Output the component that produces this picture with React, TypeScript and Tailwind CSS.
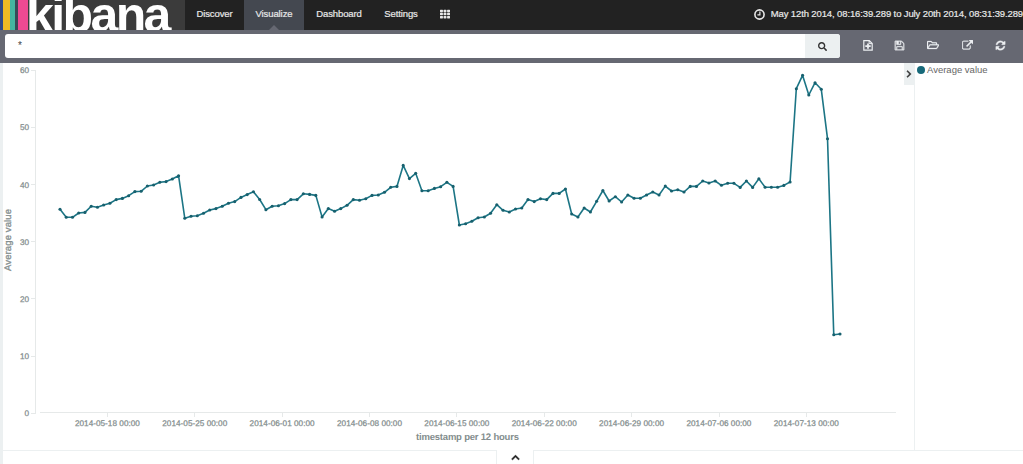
import React from "react";
import { FaTh, FaSearch, FaChevronRight, FaChevronUp, FaRegFolderOpen } from "react-icons/fa";

const STEP = 6.24;
const X0 = 60;

// Vertical positions of the 12-hour averages in chart coordinates.
const points = [
  209.3, 217.3, 217.3, 213, 212.4, 206.3, 207.3, 205, 203.3, 199.6, 198.4, 195.7, 191.6, 191.3, 186, 185,
  182.3, 181.6, 179, 175.7, 218.3, 216.3, 215.7, 213.3, 210, 208.6, 206.3, 203.3, 201.6, 197.4, 194.6, 191.7,
  199.5, 209.7, 206.3, 205.7, 203.6, 199.6, 199.6, 193.8, 194.4, 195.4, 217, 208.6, 211.3, 208.6, 205.3,
  199.6, 200.3, 198.7, 195.4, 195, 192.3, 187.3, 186.4, 165.4, 178.6, 173.3, 190.7, 190.7, 188.4, 186.7,
  182.3, 186.4, 225, 223.7, 221.3, 217.7, 217, 213.3, 204.7, 210.3, 212, 209, 208, 199.6, 201.6, 198.7,
  199.6, 193.4, 193.4, 189, 214, 217, 208, 212, 201.3, 190.5, 201, 196.7, 202, 195, 198.3, 198.3, 195, 192,
  195, 186.1, 191, 189.7, 192, 186.4, 186.4, 181, 183, 181, 185.3, 183.3, 183.3, 187.4, 181, 187.4, 178.7,
  187.3, 187.3, 187.3, 185.4, 182, 88.7, 75.3, 95, 82.7, 89.3, 138.7, 334.8, 334,
];

const yTicks = [60, 50, 40, 30, 20, 10, 0];
const xTicks = [
  "2014-05-18", "2014-05-25", "2014-06-01", "2014-06-08", "2014-06-15",
  "2014-06-22", "2014-06-29", "2014-07-06", "2014-07-13",
];

const SAVE =
  "M512 1536h768v-384h-768v384zm896 0h128v-896q0-14-10-38.5t-20-34.5l-281-281q-10-10-34-20t-39-10v416q0 40-28 68t-68 28h-576q-40 0-68-28t-28-68v-416h-128v1280h128v-416q0-40 28-68t68-28h832q40 0 68 28t28 68v416zm-384-928v-320q0-13-9.5-22.5t-22.5-9.5h-192q-13 0-22.5 9.5t-9.5 22.5v320q0 13 9.5 22.5t22.5 9.5h192q13 0 22.5-9.5t9.5-22.5zm640 32v928q0 40-28 68t-68 28h-1344q-40 0-68-28t-28-68v-1344q0-40 28-68t68-28h928q40 0 88 20t76 48l280 280q28 28 48 76t20 88z";
const EXTERNAL =
  "M1408 928v320q0 119-84.5 203.5t-203.5 84.5h-832q-119 0-203.5-84.5t-84.5-203.5v-832q0-119 84.5-203.5t203.5-84.5h704q14 0 23 9t9 23v64q0 14-9 23t-23 9h-704q-66 0-113 47t-47 113v832q0 66 47 113t113 47h832q66 0 113-47t47-113v-320q0-14 9-23t23-9h64q14 0 23 9t9 23zm384-864v512q0 26-19 45t-45 19-45-19l-176-176-652 652q-10 10-23 10t-23-10l-114-114q-10-10-10-23t10-23l652-652-176-176q-19-19-19-45t19-45 45-19h512q26 0 45 19t19 45z";
const REFRESH =
  "M1639 1056q0 5-1 7-64 268-268 434.5t-478 166.5q-146 0-282.5-55t-243.5-157l-129 129q-19 19-45 19t-45-19-19-45v-448q0-26 19-45t45-19h448q26 0 45 19t19 45-19 45l-137 137q71 66 161 102t187 36q134 0 250-65t186-179q11-17 53-117 8-23 30-23h192q13 0 22.5 9.5t9.5 22.5zm25-800v448q0 26-19 45t-45 19h-448q-26 0-45-19t-19-45 19-45l138-138q-148-137-349-137-134 0-250 65t-186 179q-11 17-53 117-8 23-30 23h-199q-13 0-22.5-9.5t-9.5-22.5v-7q65-268 270-434.5t480-166.5q146 0 284 55.5t245 156.5l130-129q19-19 45-19t45 19 19 45z";

function Glyph({ d, className }: { d: string; className: string }) {
  return (
    <svg viewBox="0 0 1792 1792" fill="currentColor" stroke="currentColor" strokeWidth="50" className={className}>
      <path d={d} />
    </svg>
  );
}

function NewFileIcon() {
  return (
    <svg viewBox="0 0 10 11" className="h-[11px] w-[10px]" fill="none" stroke="currentColor">
      <path d="M0.8 0.7H6.3L9.2 3.4V10.2H0.8Z" strokeWidth="1.2" />
      <path d="M6.1 0.8V3.6H9" strokeWidth="1" />
      <path d="M5 3.4V8.8M2.3 6.2H7.7" strokeWidth="1.8" />
    </svg>
  );
}

function ClockIcon() {
  return (
    <svg viewBox="0 0 11 11" className="size-[11px]" fill="none" stroke="currentColor">
      <circle cx="5.5" cy="5.5" r="4.6" strokeWidth="1.6" />
      <path d="M5.9 2.6V5.9H3.4" strokeWidth="1.2" />
    </svg>
  );
}

function Header() {
  return (
    <header className="flex h-[30px] shrink-0 overflow-hidden bg-[#222] text-[#e8e8e8]">
      <div className="flex h-full w-[185px] shrink-0 overflow-hidden bg-[#3b3b3b]">
        <div className="w-[3px] bg-[#2f4a84]" />
        <div className="w-[7px] bg-[#eebb22]" />
        <div className="w-[5px] bg-[#45b5a0]" />
        <div className="w-[3px] bg-[#394a57]" />
        <div className="w-[10px] bg-[#ee4a92]" />
        <div className="h-full pl-px">
          <span className="-mt-[13px] -ml-[3px] block text-[50px] leading-[56px] font-bold tracking-[-2.6px] text-white">kibana</span>
        </div>
      </div>
      <nav className="flex text-[9.5px] leading-[27px] tracking-[-0.1px] [-webkit-text-stroke:0.2px_currentColor]">
        <a className="w-[59px] text-center">Discover</a>
        <a className="flex w-[60px] flex-col items-center justify-between bg-[#444850]">
          <span className="h-[25px]">Visualize</span>
          <svg viewBox="0 0 10 5" className="h-[5px] w-[10px] shrink-0"><path d="M0 5L5 0L10 5Z" fill="#666872" /></svg>
        </a>
        <a className="w-[70px] text-center">Dashboard</a>
        <a className="w-[54px] text-center">Settings</a>
        <a className="flex h-[27px] w-[34px] items-center justify-center"><FaTh className="size-[10px]" /></a>
      </nav>
      <div className="ml-auto flex h-[28px] items-center gap-[6px] whitespace-nowrap">
        <ClockIcon />
        <span className="text-[9.5px] tracking-[-0.12px] [-webkit-text-stroke:0.2px_currentColor]">
          May 12th 2014, 08:16:39.289 to July 20th 2014, 08:31:39.289
        </span>
      </div>
    </header>
  );
}

function Toolbar() {
  return (
    <div className="flex h-[33px] shrink-0 items-start bg-[#666872] pt-[4px] pl-[5px] text-[#eceef1]">
      <div className="flex h-[24px] w-[835px] overflow-hidden rounded-[3px] bg-white">
        <span className="flex-1 pt-[4px] pl-[13px] text-[10px] leading-[15px] text-[#444]">*</span>
        <button className="flex w-[35px] items-center justify-center bg-[#ecf0f1] text-[#333]">
          <FaSearch className="size-[9px]" />
        </button>
      </div>
      <div className="flex h-[22px] items-center pl-[11px]">
        <span className="flex w-[33px] justify-center"><NewFileIcon /></span>
        <span className="flex w-[30px] justify-center"><Glyph d={SAVE} className="size-[11px]" /></span>
        <span className="flex w-[37px] justify-center"><FaRegFolderOpen className="size-[12px]" stroke="currentColor" strokeWidth="12" /></span>
        <span className="flex w-[32px] justify-center"><Glyph d={EXTERNAL} className="size-[11px]" /></span>
        <span className="flex w-[34px] justify-center"><Glyph d={REFRESH} className="size-[11px]" /></span>
      </div>
    </div>
  );
}

function Chart() {
  const path = points.map((y, i) => `${i ? "L" : "M"}${(X0 + i * STEP).toFixed(2)} ${y}`).join("");
  return (
    <svg viewBox="3 63 901 387" className="h-[387px] w-[901px] shrink-0" textRendering="geometricPrecision">
      <g stroke="#e6e9e9" strokeWidth="1" fill="none">
        <path d="M35.5 70.5V413M40 412.5H896" />
        {yTicks.map((t, i) => <path key={t} d={`M31 ${Math.round(70 + i * 57.1) + 0.5}H36`} />)}
        {xTicks.map((t, i) => <path key={t} d={`M${Math.round(107 + i * 87.36) + 0.5} 413V417`} />)}
      </g>
      <g fill="#848e8e" stroke="#848e8e" strokeWidth="0.25" fontSize="8.2" fontFamily="'Liberation Sans', Arial, sans-serif">
        {yTicks.map((t, i) => <text key={t} x="29" y={73.3 + i * 57.15} textAnchor="end">{t}</text>)}
        {xTicks.map((t, i) => (
          <text key={t} x={107.4 + i * 87.36} y="426" textAnchor="middle" textLength="65">{t} 00:00</text>
        ))}
      </g>
      <g fill="#848e8e" fontFamily="'Liberation Sans', Arial, sans-serif">
        <text x="467.5" y="440.3" fontSize="9.5" fontWeight="bold" textAnchor="middle" textLength="103">timestamp per 12 hours</text>
        <text transform="translate(11.3 240) rotate(-90)" fontSize="9.5" stroke="#848e8e" strokeWidth="0.3" textAnchor="middle" textLength="62">Average value</text>
      </g>
      <path d={path} fill="none" stroke="#1c7585" strokeWidth="1.6" strokeLinejoin="round" />
      {points.map((y, i) => <circle key={i} cx={X0 + i * STEP} cy={y} r="1.55" fill="#17606e" />)}
    </svg>
  );
}

export default function App() {
  return (
    <div className="flex h-[464px] w-[1023px] flex-col overflow-hidden bg-white font-['Liberation_Sans',Arial,sans-serif]">
      <Header />
      <Toolbar />
      <main className="flex flex-1 border-l-[3px] border-[#ecf0f1]">
        <div className="flex flex-1 flex-col">
          <div className="flex h-[387px]">
            <Chart />
            <button className="flex h-[22px] w-[10px] items-center justify-center bg-[#ecf0f1] text-[#333]">
              <FaChevronRight className="size-[8px]" stroke="currentColor" strokeWidth="25" />
            </button>
            <aside className="flex-1 border-l border-[#ecf0f1]">
              <div className="flex h-[14px] items-center gap-[2px] pl-[2px] text-[9.5px] text-[#666]">
                <span className="size-[8px] rounded-full bg-[#17697a]" />
                <span>Average value</span>
              </div>
            </aside>
          </div>
          <footer className="flex h-[14px]">
            <div className="w-[494px] border-t border-r border-[#ecf0f1]" />
            <button className="flex w-[36px] items-center justify-center pt-px text-[#222]">
              <FaChevronUp className="size-[9px]" stroke="currentColor" strokeWidth="25" />
            </button>
            <div className="flex-1 border-t border-l border-[#ecf0f1]" />
          </footer>
        </div>
      </main>
    </div>
  );
}
